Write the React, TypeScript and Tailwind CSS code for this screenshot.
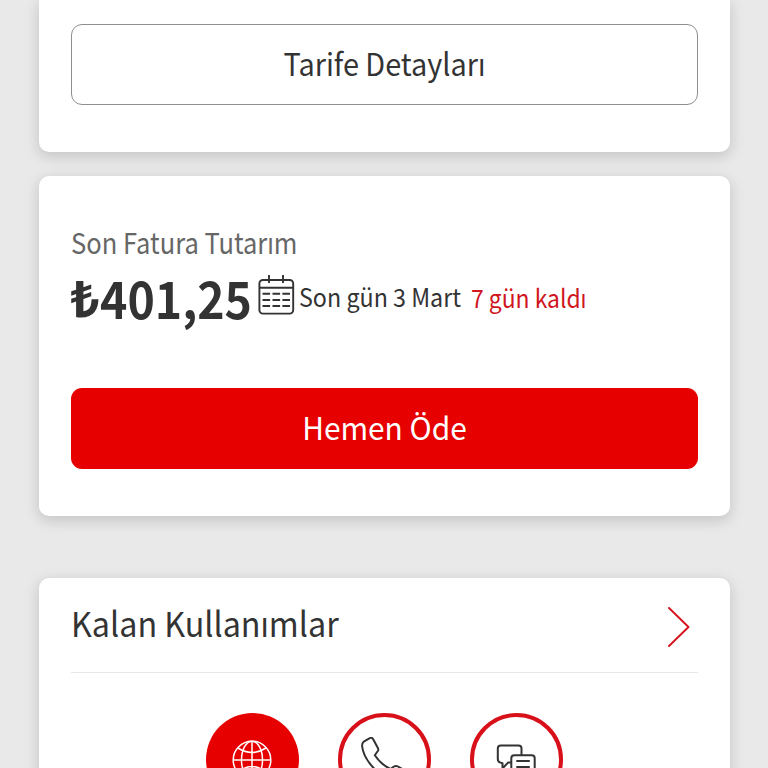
import { type ReactNode } from 'react';

interface CardProps {
  className: string;
  children: ReactNode;
}

function Card({ className, children }: CardProps) {
  return (
    <section className={`w-[691px] shrink-0 bg-white px-8 shadow-[0_4px_14px_1px_rgba(0,0,0,0.15)] ${className}`}>
      {children}
    </section>
  );
}

export default function App() {
  return (
    <main className="flex h-[768px] w-[768px] flex-col items-center overflow-hidden bg-[#e9e9e9] font-['Noto_Sans_CJK_JP','Noto_Sans',sans-serif] font-normal leading-none whitespace-nowrap text-[#333333]">
      {/* Tariff */}
      <Card className="h-[152px] rounded-b-[10px] pt-6">
        <button className="flex h-[81px] w-full items-center justify-center rounded-[11px] border border-[#8f8f8f] pb-1 text-[31px]">
          <span className="scale-x-[0.931]">Tarife Detayları</span>
        </button>
      </Card>

      {/* Last bill */}
      <Card className="mt-6 h-[340px] rounded-[10px] pt-[49px]">
        <p className="flex h-8 items-center text-[29px] text-[#666666]">
          <span className="origin-left scale-x-[0.88]">Son Fatura Tutarım</span>
        </p>
        <div className="mt-[11px] flex h-[62px] items-center">
          <p className="flex w-[187px] shrink-0 pb-1 text-[51px] font-bold">
            <span className="w-8 origin-left scale-x-[0.98] font-['Noto_Sans',sans-serif]">₺</span>
            <span className="origin-left scale-x-[0.91]">401,25</span>
          </p>
          <CalendarIcon />
          <p className="ml-1 w-[172px] shrink-0 pb-[5px] text-[25px]">
            <span className="inline-block origin-left scale-x-[0.931]">Son gün 3 Mart</span>
          </p>
          <p className="pb-1 text-[25px] text-[#d01620]">
            <span className="inline-block origin-left scale-x-[0.915]">7 gün kaldı</span>
          </p>
        </div>
        <button className="mt-[58px] flex h-[81px] w-full items-center justify-center rounded-[11px] bg-[#e60000] pb-1 text-[31px] text-white">
          <span className="scale-x-[0.963]">Hemen Öde</span>
        </button>
      </Card>

      {/* Remaining usage */}
      <Card className="mt-[62px] h-[260px] rounded-[10px]">
        <header className="flex h-[95px] items-center justify-between border-b border-[#e8e8e8] pr-[7px]">
          <h2 className="origin-left scale-x-[0.95] pb-[5px] text-[34px]">Kalan Kullanımlar</h2>
          <svg className="mt-[3px] h-10 w-6" viewBox="0 0 24 40" fill="none" stroke="#d51420" strokeWidth="1.9" strokeLinecap="round" strokeLinejoin="round">
            <path d="M2 1L21.5 20L2 39" />
          </svg>
        </header>
        <div className="flex justify-center gap-[39px] pt-10">
          <div className="flex h-[93px] w-[93px] items-center justify-center rounded-full bg-[#e60000]">
            <GlobeIcon />
          </div>
          <div className="flex h-[93px] w-[93px] items-center justify-center rounded-full border-4 border-[#d8101a]">
            <PhoneIcon />
          </div>
          <div className="flex h-[93px] w-[93px] items-center justify-center rounded-full border-4 border-[#d8101a]">
            <MessagesIcon />
          </div>
        </div>
      </Card>
    </main>
  );
}

function CalendarIcon() {
  return (
    <svg className="-mt-2 h-10 w-[37px] shrink-0" viewBox="0 0 37 40" fill="none" stroke="#333333" strokeWidth="1.9">
      <rect x="1.4" y="5" width="33.8" height="33.6" rx="3.5" />
      <path d="M1.4 12.7H35.2M11 0v8M25 0v8" />
      <path d="M4.5 18.8h7.6M14.5 18.8h7.6M24.4 18.8H32M4.5 25h7.6M14.5 25h7.6M24.4 25H32M4.5 31h7.6M14.5 31h7.6M24.4 31H32" />
    </svg>
  );
}

function GlobeIcon() {
  return (
    <svg className="h-10 w-10" viewBox="0 0 40 40" fill="none" stroke="white" strokeWidth="1.5">
      <circle cx="20" cy="20" r="18.8" />
      <ellipse cx="20" cy="20" rx="10.5" ry="18.8" />
      <path d="M20 1.2v37.6M1.2 20h37.6M6 8q14 9 28 0M6 32q14-11 28 0" />
    </svg>
  );
}

function PhoneIcon() {
  return (
    <svg className="h-[46px] w-[46px]" viewBox="0 0 46 46" fill="none" stroke="#333333" strokeWidth="2" strokeLinejoin="round">
      <path d="M8.8 1.2L2.8 4.7Q.9 6 1.1 9C2.6 24 21 43 35 44q4 .4 6-2l3-6q.8-2-1-3l-6-3.5q-2-1.2-4 0l-3.5 2.5C23 29 17 23 13.8 18.3l3.2-4.6q.7-1.2 0-2.5L12.2 2.3q-1.1-2.2-3.4-1.1Z" />
    </svg>
  );
}

function MessagesIcon() {
  return (
    <svg className="h-10 w-10" viewBox="0 0 40 40" fill="none" stroke="#333333" strokeWidth="2" strokeLinejoin="round">
      <path d="M15.3 22.6H12L6.5 28.5V23.2L4.5 22.6Q1.8 21.8 1.8 19V8.5q0-3 3-3h17.7q3 0 3 3v6.7" />
      <path d="M18.3 15.3h17.4q3 0 3 3v12q0 3-3 3h-2v5l-6-5h-9.4q-3 0-3-3v-12q0-3 3-3ZM20.3 21h13.5M20.3 27h13.5" />
    </svg>
  );
}
